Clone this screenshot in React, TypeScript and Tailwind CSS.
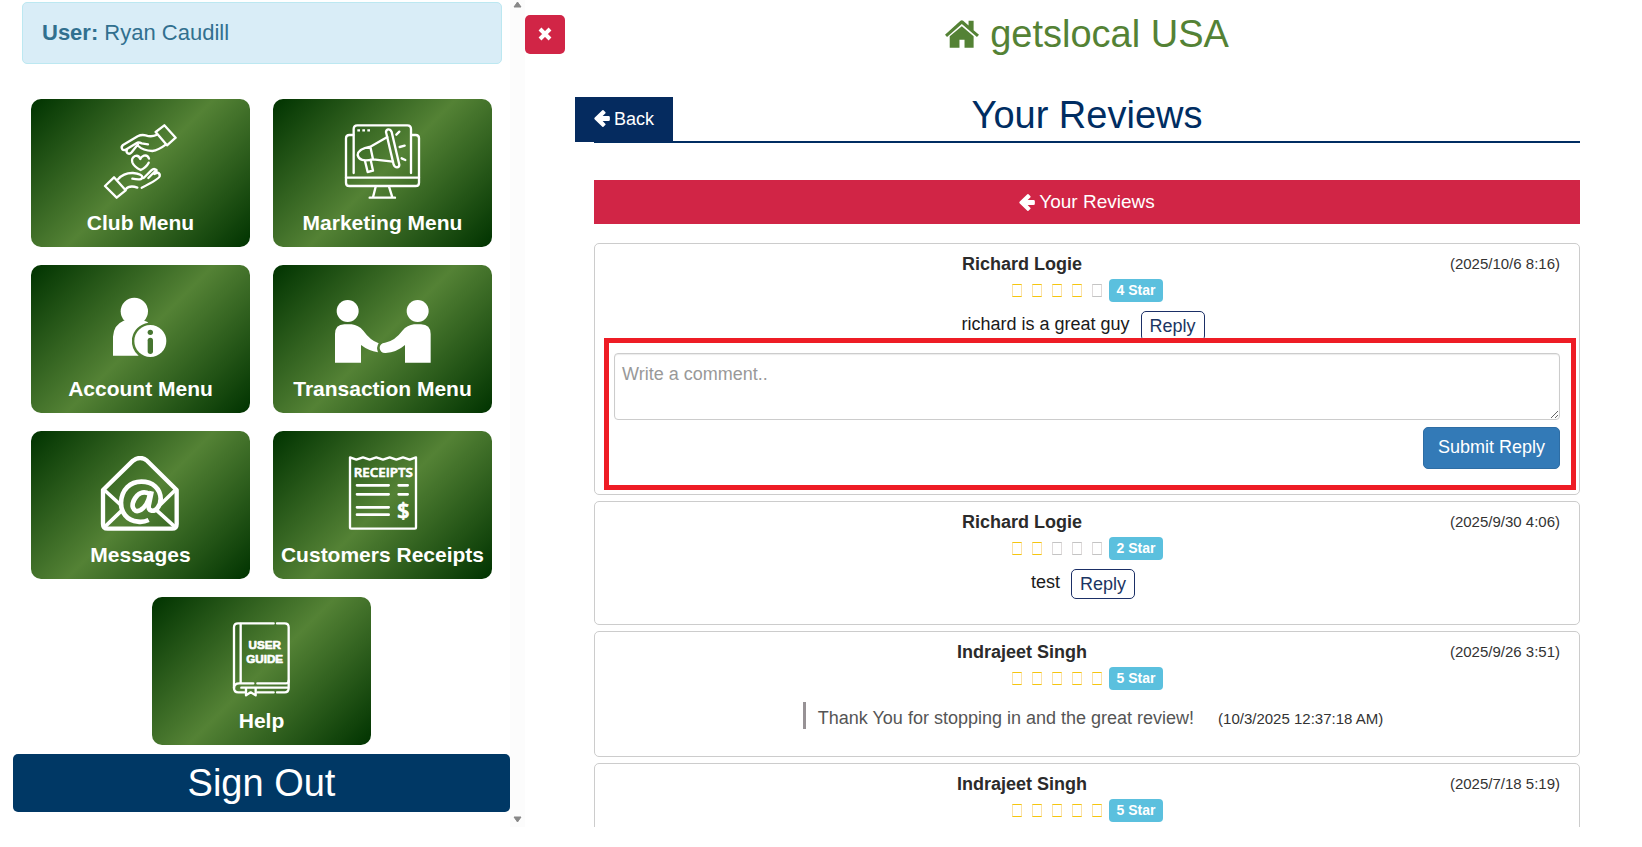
import React, { useState } from 'react';

interface MenuItem {
  label: string;
  icon: React.ReactNode;
}

interface Review {
  id: number;
  name: string;
  date: string;
  stars: number;
  comment?: string;
  reply?: { text: string; date: string };
}

const reviews: Review[] = [
  { id: 1, name: 'Richard Logie', date: '(2025/10/6 8:16)', stars: 4, comment: 'richard is a great guy' },
  { id: 2, name: 'Richard Logie', date: '(2025/9/30 4:06)', stars: 2, comment: 'test' },
  {
    id: 3,
    name: 'Indrajeet Singh',
    date: '(2025/9/26 3:51)',
    stars: 5,
    reply: { text: 'Thank You for stopping in and the great review!', date: '(10/3/2025 12:37:18 AM)' },
  },
  { id: 4, name: 'Indrajeet Singh', date: '(2025/7/18 5:19)', stars: 5 },
];

function MenuIcon({ children }: { children: React.ReactNode }) {
  return (
    <svg
      viewBox="2 0 324 225"
      className="w-[108px] h-[75px]"
      fill="none"
      stroke="white"
      strokeWidth="7"
      strokeLinecap="round"
      strokeLinejoin="round"
      aria-hidden="true"
    >
      {children}
    </svg>
  );
}

function ArrowLeftIcon() {
  return (
    <svg viewBox="0 0 48 52" className="w-4 h-[17px]" fill="currentColor" aria-hidden="true">
      <path d="M25 1Q28 -1 30 2L34 6Q36 8 34 11L26 18H44Q48 18 48 22V30Q48 34 44 34H26L34 42Q36 44 34 46L30 50Q28 53 25 51L2 29Q-1 26 2 23Z" />
    </svg>
  );
}

const menuItems: MenuItem[] = [
  {
    label: 'Club Menu',
    icon: (
      <MenuIcon>
        <path d="M208 24L234 4L268 41L242 64Z" />
        <path d="M210 33Q195 40 178 34Q165 31 154 37L110 63Q103 69 108 76Q112 80 118 77L150 58Q156 53 166 58L185 61" />
        <path d="M155 61L136 85Q130 92 124 88Q118 83 122 76M156 66Q170 80 198 81Q216 79 238 62" />
        <path d="M188 104Q184 92 173 95Q164 98 162 105Q157 92 146 96Q134 102 138 115Q143 128 163 138Q180 130 187 116" />
        <path d="M56 186L83 160L118 199L91 221Z" />
        <path d="M95 166Q112 146 140 147Q168 150 168 160Q167 170 138 164M172 162L195 139Q203 131 210 138L186 162" />
        <path d="M210 138Q212 144 204 150L214 146Q222 149 220 157Q219 164 166 191M118 196Q130 182 153 191" />
      </MenuIcon>
    ),
  },
  {
    label: 'Marketing Menu',
    icon: (
      <MenuIcon>
        <path d="M75 33H63Q53 33 53 43V176Q53 186 63 186H262Q272 186 272 176V43Q272 33 262 33H250" />
        <path d="M76 147V15Q76 4 87 4H237Q248 4 248 15V147M53 161H272" />
        <path d="M142 188L134 220M182 188L192 220M124 221H200" />
        <path
          strokeLinecap="butt"
          d="M87 19h8M102 19h8M117 19h8"
        />
        <path d="M173 24Q174 16 180 16Q187 16 190 24L213 122Q213 129 206 130Q199 130 196 122Z" />
        <path d="M126 68L177 39M134 106L194 113M126 68L134 106M126 68Q90 74 88 93Q92 116 134 106" />
        <path d="M110 111L118 144L134 140L127 108M204 32L213 23M214 69L229 65M220 103L231 108" />
      </MenuIcon>
    ),
  },
  {
    label: 'Account Menu',
    icon: (
      <MenuIcon>
        <g fill="white" stroke="none">
          <circle cx="144" cy="64" r="41" />
          <path d="M80 197V140Q82 104 112 92H174Q184 95 186 98Q145 106 137 145Q134 180 157 197Z" />
          <circle cx="192" cy="153" r="48" />
        </g>
        <g fill="#467530" stroke="none">
          <circle cx="192" cy="127" r="8" />
          <rect x="184" y="143" width="16" height="49" rx="8" />
        </g>
      </MenuIcon>
    ),
  },
  {
    label: 'Transaction Menu',
    icon: (
      <MenuIcon>
        <g fill="white" stroke="none">
          <circle cx="58" cy="63" r="33" />
          <circle cx="268" cy="63" r="33" />
          <path d="M20 218V132Q20 104 48 103H70Q90 105 105 122Q125 150 151 160Q143 172 149 187Q120 182 98 165V218Z" />
          <path d="M307 218V132Q307 104 278 103H257Q237 105 222 122Q200 152 170 158Q154 160 154 174Q156 190 172 189Q205 187 230 165V218Z" />
        </g>
      </MenuIcon>
    ),
  },
  {
    label: 'Messages',
    icon: (
      <MenuIcon>
        <path
          strokeWidth="13"
          d="M50 102L140 14Q162 -2 182 14L271 102V204Q271 218 257 218H64Q50 218 50 204Z"
        />
        <path strokeWidth="11" d="M54 102L100 144M267 102L224 144M56 212L106 164M265 212L212 164" />
        <path
          strokeWidth="14"
          strokeLinecap="butt"
          d="M187 192Q172 199 155 197C120 194 104 168 104 140C106 100 132 77 165 77C200 77 222 98 223 128C223 150 208 166 196 164Q184 162 188 145L196 106"
        />
        <path strokeWidth="14" d="M190 114Q170 102 153 118Q137 136 139 152Q145 172 163 162Q184 148 190 118" />
      </MenuIcon>
    ),
  },
  {
    label: 'Customers Receipts',
    icon: (
      <MenuIcon>
        <path d="M65 4V214Q65 218 69 218H259Q263 218 263 214V4L244 11L224 4L204 11L184 4L164 11L144 4L124 11L104 4L84 11Z" />
        <path strokeWidth="8" d="M86 88H181M86 115H181M86 154H181M86 176H181M211 88H238M211 115H238" />
        <g
          fill="white"
          strokeWidth="2"
          textAnchor="middle"
          className="font-['Open_Sans',sans-serif] font-semibold"
        >
          <text x="165" y="63" fontSize="40">RECEIPTS</text>
          <text x="225" y="186" fontSize="66">$</text>
        </g>
      </MenuIcon>
    ),
  },
  {
    label: 'Help',
    icon: (
      <MenuIcon>
        <path d="M199 4H92Q80 4 80 16V198Q80 211 93 211H112M209 4H232Q244 4 244 16V198Q244 211 232 211H209" />
        <path d="M100 6V182M150 184H236Q244 184 244 176M138 184H96Q80 184 80 198M102 197H240M150 211H199" />
        <path d="M116 199V220L130 211L145 220V199" />
        <g
          fill="white"
          strokeWidth="2"
          textAnchor="middle"
          className="font-['Liberation_Sans',sans-serif] font-bold"
        >
          <text x="172" y="80" fontSize="35">USER</text>
          <text x="172" y="122" fontSize="35">GUIDE</text>
        </g>
      </MenuIcon>
    ),
  },
];

function Stars({ count }: { count: number }) {
  return (
    <div className="flex items-center justify-center mt-[3px] pl-px">
      <div className="flex gap-[10px] mr-[7px]" role="img" aria-label={`${count} of 5`}>
        {[1, 2, 3, 4, 5].map((n) => (
          <span
            key={n}
            className={
              n <= count
                ? 'w-[10px] h-[13px] border border-x-[#fbe2a8] border-y-[#f5c60f]'
                : 'w-[10px] h-[13px] border border-x-[#dedada] border-y-[#c4c4c4]'
            }
          />
        ))}
      </div>
      <span className="bg-[#5bc0de] text-white text-sm font-bold leading-[23px] px-2 rounded">{count} Star</span>
    </div>
  );
}

function ReplyForm() {
  const [text, setText] = useState('');

  return (
    <form className="relative mt-3" onSubmit={(e) => e.preventDefault()}>
      <textarea
        aria-label="Reply"
        placeholder="Write a comment.."
        value={text}
        onChange={(e) => setText(e.target.value)}
        className="block w-full h-[67px] px-[7px] py-2 border border-[#ccc] rounded-sm resize-y shadow-[inset_0_1px_1px_rgba(0,0,0,0.08)] placeholder:text-[#999] leading-6"
      />
      <button
        type="submit"
        className="block ml-auto mt-[7px] h-[42px] px-3.5 pb-0.5 bg-[#337ab7] border border-[#2e6da4] rounded-[5px] text-white"
      >
        Submit Reply
      </button>
      <div className="absolute -top-[15px] -bottom-[21px] -left-[10px] -right-4 border-5 border-[#ee1c25] pointer-events-none" />
    </form>
  );
}

function ReviewCard({ review, replying }: { review: Review; replying: boolean }) {
  return (
    <article className="border border-[#ccc] rounded-[5px] px-[19px] pt-2 pb-[25px]">
      <div className="flex leading-6">
        <h3 className="flex-1 text-center font-bold text-[#2b2b2b]">{review.name}</h3>
        <time className="ml-5 text-[15px] text-[#333]">{review.date}</time>
      </div>
      <Stars count={review.stars} />
      {review.comment && (
        <div className="flex items-start justify-center gap-[11px] mt-[9px] pr-2">
          <p className="leading-[26px] text-[#1a1a1a]">{review.comment}</p>
          <button
            type="button"
            className="h-[30px] px-2 border border-[#1b2f66] rounded-[5px] bg-white text-[#1b3563] leading-7"
          >
            Reply
          </button>
        </div>
      )}
      {review.reply && (
        <div className="flex items-baseline justify-center h-[29px] mt-3 pl-3 leading-8">
          <span className="self-start w-[3px] h-[27px] mr-3 bg-[#979295]" />
          <p className="text-[#555]">{review.reply.text}</p>
          <time className="ml-6 text-[15px] text-[#333]">{review.reply.date}</time>
        </div>
      )}
      {replying && <ReplyForm />}
    </article>
  );
}

export default function App() {
  return (
    <div className="h-screen pb-5 bg-white font-['Liberation_Sans',Arial,sans-serif] text-lg overflow-hidden">
      <div className="flex h-full overflow-hidden">
        <aside className="flex w-[525px] shrink-0">
          <div className="flex-1 pl-[13px] pt-0.5">
            <div className="ml-[9px] mr-2 h-[62px] px-[19px] flex items-center bg-[#d9edf7] border border-[#bce8f1] rounded-[5px] text-[22px] text-[#31708f]">
              <p>
                <strong>User:</strong> Ryan Caudill
              </p>
            </div>
            <nav className="grid grid-cols-2 gap-x-[23px] gap-y-[18px] mt-[35px] px-[18px]">
              {menuItems.map((item) => (
                <a
                  key={item.label}
                  href="#"
                  className="flex flex-col items-center pt-[25px] h-[148px] rounded-[10px] bg-[linear-gradient(135deg,#003300,#548235,#003300)] last:col-span-2 last:justify-self-center last:w-[219px]"
                >
                  {item.icon}
                  <span className="mt-3 text-[21px] leading-6 font-bold text-white whitespace-nowrap">{item.label}</span>
                </a>
              ))}
            </nav>
            <button
              type="button"
              className="block w-full h-[58px] mt-[9px] rounded-[5px] bg-[#003865] text-white text-[38px] leading-[42px]"
            >
              Sign Out
            </button>
          </div>
          {/* scroll track */}
          <div className="w-[15px] flex flex-col items-center justify-between pt-px pb-1 bg-[#fcfcfc]">
            <svg viewBox="0 0 9 7" className="w-[9px] h-[7px]" aria-hidden="true">
              <path d="M4.500 1L8 6H1Z" fill="#888" stroke="#888" strokeLinejoin="round" />
            </svg>
            <svg viewBox="0 0 9 7" className="w-[9px] h-[7px]" aria-hidden="true">
              <path d="M4.500 6L8 1H1Z" fill="#888" stroke="#888" strokeLinejoin="round" />
            </svg>
          </div>
        </aside>

        <button
          type="button"
          aria-label="Close menu"
          className="flex items-center justify-center shrink-0 w-10 h-[39px] mt-[15px] pb-0.5 rounded-[5px] bg-[#d12546] text-white"
        >
          <svg viewBox="0 0 14 14" className="w-3.5 h-3.5" stroke="currentColor" strokeWidth="4" aria-hidden="true">
            <path d="M2 2L12 12M12 2L2 12" />
          </svg>
        </button>

        <main className="flex-1 min-w-0 pl-[29px] pr-[62px]">
          <h1 className="flex items-center justify-center gap-[11px] pt-[13px] text-[38px] leading-[42px] text-[#548235]">
            <svg viewBox="22 59 101 82" className="w-[34px] h-[28px]" fill="currentColor" aria-hidden="true">
              <path d="M22 102L68 61Q72 58 76 61L92 75V61H107V89L123 102L117 109L72 70L28 109Z" />
              <path d="M72 77L107 107V141H80V117H65V141H36V107Z" />
            </svg>
            getslocal USA
          </h1>

          <div className="grid grid-cols-[1fr_auto_1fr] items-end mt-[39px] border-b-2 border-[#002d62]">
            <button
              type="button"
              className="justify-self-start flex items-center gap-1 h-[45px] -ml-[19px] -mb-px px-[19px] pb-0.5 bg-[#052b5f] text-white"
            >
              <ArrowLeftIcon />
              Back
            </button>
            <h2 className="pb-[5px] text-[38px] leading-[42px] text-[#002d62]">Your Reviews</h2>
          </div>

          <button
            type="button"
            className="flex items-center justify-center gap-1 w-full h-11 mt-[37px] bg-[#d12546] text-white text-[19px]"
          >
            <ArrowLeftIcon />
            Your Reviews
          </button>

          <section className="flex flex-col gap-1.5 mt-[19px]">
            {reviews.map((review) => (
              <ReviewCard key={review.id} review={review} replying={review.id === 1} />
            ))}
          </section>
        </main>
      </div>
    </div>
  );
}
